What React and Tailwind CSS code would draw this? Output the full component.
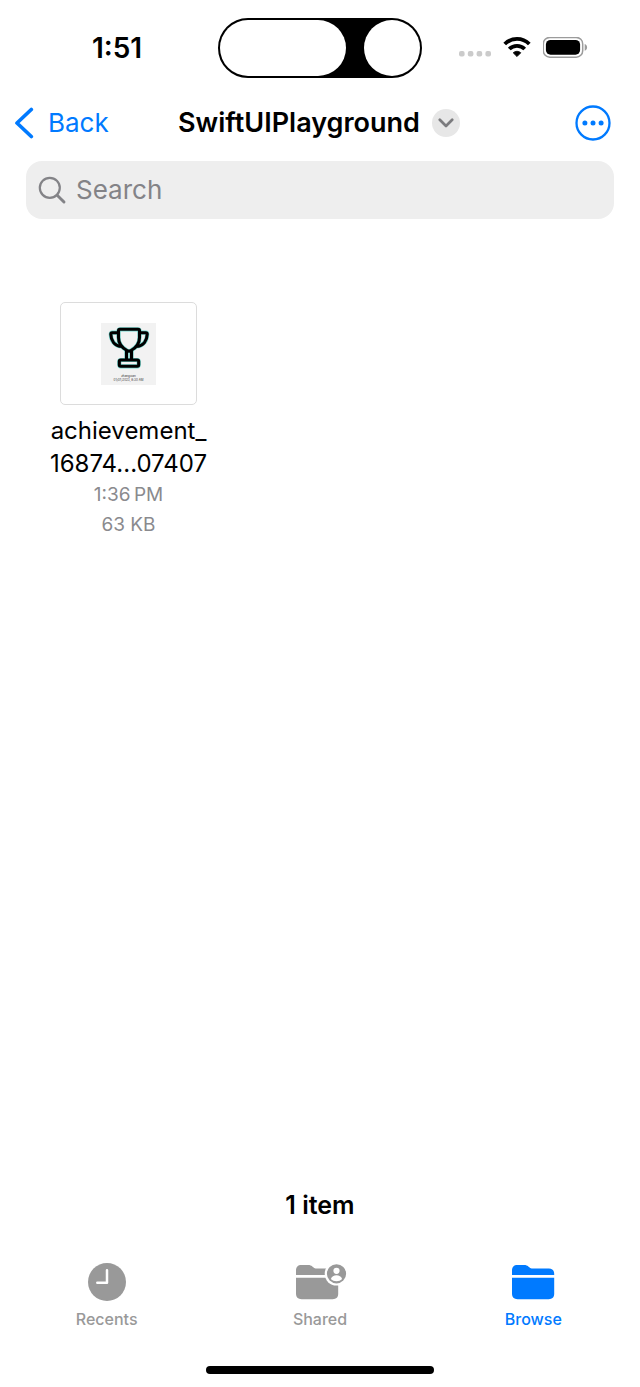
import React from "react";

function SignalDots() {
  return (
    <svg width="32" height="6" viewBox="0 0 32 6" fill="#cbcbcb" aria-hidden="true">
      <rect x="0" y="0" width="5.6" height="5.6" rx="2" />
      <rect x="8.8" y="0" width="5.6" height="5.6" rx="2" />
      <rect x="17.6" y="0" width="5.6" height="5.6" rx="2" />
      <rect x="26.4" y="0" width="5.6" height="5.6" rx="2" />
    </svg>
  );
}

function WifiIcon() {
  return (
    <svg width="28" height="22" viewBox="0 0 28 22" aria-hidden="true">
      <g fill="none" stroke="#000" strokeWidth="3.8">
        <path d="M1.700 7a17.400 17.400 0 0 1 24.600 0" />
        <path d="M6.300 12a10.900 10.900 0 0 1 15.400 0" />
      </g>
      <path d="M10.200 15.800a5.500 5.500 0 0 1 7.600 0L14 19.600z" fill="#000" stroke="#000" strokeWidth="0.800" strokeLinejoin="round" />
    </svg>
  );
}

function BatteryIcon() {
  return (
    <svg width="46" height="22" viewBox="0.500 0.400 46 22" aria-hidden="true">
      <rect x="0.800" y="0.800" width="39.400" height="19.800" rx="6.500" fill="none" stroke="#9b9b9b" strokeWidth="1.500" />
      <rect x="3.400" y="3.300" width="34.200" height="14.800" rx="4.600" fill="#000" />
      <path d="M42.200 7.400c1.500.6 2.400 1.900 2.400 3.400s-.9 2.800-2.400 3.400z" fill="#9b9b9b" />
    </svg>
  );
}

function StatusBar() {
  return (
    <div className="grid grid-cols-[1fr_204px_1fr] items-center pt-[18px] pb-4">
      <time className="pl-4 text-center text-[28px] leading-8 font-semibold">1:51</time>
      <div className="flex h-[60px] justify-between rounded-full border-2 border-black bg-black">
        <div className="h-14 w-[126px] rounded-full bg-white" />
        <div className="size-14 rounded-full bg-white" />
      </div>
      <div className="flex items-center gap-3 pl-[37px]">
        <div className="pt-3">
          <SignalDots />
        </div>
        <WifiIcon />
        <BatteryIcon />
      </div>
    </div>
  );
}

function NavBar() {
  return (
    <header className="grid h-[58px] grid-cols-[1fr_auto_1fr] items-center pr-[29px] pl-[14px]">
      <a href="#back" className="flex items-center gap-[14px] text-[26px] leading-8 text-[#007aff]">
        <svg width="20" height="32" viewBox="0 0 20 32" fill="none" aria-hidden="true">
          <path d="M17.300 2.500 3 16l14.300 13.500" stroke="currentColor" strokeWidth="3.700" strokeLinecap="round" strokeLinejoin="round" />
        </svg>
        Back
      </a>
      <div className="flex items-center gap-3 pl-[13px]">
        <h1 className="text-[27px] leading-8 font-semibold">SwiftUIPlayground</h1>
        <button type="button" aria-label="Folder options" className="flex size-7 items-center justify-center rounded-full bg-[#e7e7e7]">
          <svg width="16" height="10" viewBox="0 0 16 10" fill="none" aria-hidden="true">
            <path d="M1.800 1.800 8 8l6.200-6.200" stroke="#7b7b7e" strokeWidth="2.700" strokeLinecap="round" strokeLinejoin="round" />
          </svg>
        </button>
      </div>
      <button type="button" aria-label="More" className="justify-self-end text-[#007aff]">
        <svg width="36" height="36" viewBox="0 0 36 36" aria-hidden="true">
          <circle cx="18" cy="18" r="16.500" fill="none" stroke="currentColor" strokeWidth="2.300" />
          <g fill="currentColor">
            <circle cx="9.900" cy="18" r="2.500" />
            <circle cx="18" cy="18" r="2.500" />
            <circle cx="26.100" cy="18" r="2.500" />
          </g>
        </svg>
      </button>
    </header>
  );
}

function SearchField() {
  return (
    <div className="mx-[26px] mt-[9px] flex h-[58px] items-center gap-[9px] rounded-2xl bg-[#eeeeee] px-3">
      <svg width="29" height="29" viewBox="0 0 29 29" fill="none" stroke="#838387" aria-hidden="true">
        <circle cx="11.800" cy="11.800" r="10" strokeWidth="2.200" />
        <path d="M19.200 19.200 26 26" strokeWidth="2.900" strokeLinecap="round" />
      </svg>
      <input
        type="search"
        aria-label="Search"
        placeholder="Search"
        className="min-w-0 flex-1 bg-transparent text-[26px] leading-8 outline-none placeholder:text-[#838387]"
      />
    </div>
  );
}

function TrophyPaths() {
  return (
    <>
      <path d="M12 2.800h18q1.500 0 1.500 1.500v6.700c0 5.500-3.300 10.200-8.500 13q-2 1.200-4 0c-5.200-2.800-8.500-7.500-8.500-13V4.300Q10.500 2.800 12 2.800z" />
      <path d="M10.500 6.200H4.300q-1.500 0-1.500 1.500c.2 6.500 3.800 11.300 10.200 12.300" />
      <path d="M31.500 6.200h6.200q1.500 0 1.500 1.500c-.2 6.500-3.800 11.300-10.200 12.300" />
      <path d="M18.500 24.500v9M23.500 24.500v9" />
      <rect x="11.300" y="33.500" width="19.400" height="6.300" rx="1.500" />
    </>
  );
}

function FileTile() {
  return (
    <a href="#achievement" className="flex flex-col items-center text-center">
      <div className="flex h-[103px] w-[137px] items-center justify-center rounded-[5px] border border-[#dcdcdc]">
        <div className="flex h-[62px] w-[55px] flex-col items-center bg-[#f2f2f2] pt-1">
          <svg width="42" height="44" viewBox="0 0.500 42 44" fill="none" strokeLinejoin="round" aria-hidden="true">
            <g stroke="#6fd6cd" strokeWidth="4.200">
              <TrophyPaths />
            </g>
            <g stroke="#000" strokeWidth="3.100">
              <TrophyPaths />
            </g>
          </svg>
          <div className="pt-[3px] text-[3px] leading-[4px] text-[#333]">
            <p>zhangxian</p>
            <p>01/07/2023, 8:30 AM</p>
          </div>
        </div>
      </div>
      <div className="pt-[9px] text-[24px] leading-[33px]">
        <p>achievement_</p>
        <p>16874...07407</p>
      </div>
      <div className="text-[19px] leading-[30px] text-[#8a8a8e]">
        <p>1:36&#8201;PM</p>
        <p>63 KB</p>
      </div>
    </a>
  );
}

function ClockIcon() {
  return (
    <svg width="38" height="38" viewBox="0 0 38 38" aria-hidden="true">
      <circle cx="19" cy="19" r="19" fill="currentColor" />
      <path d="M19 7.300v12.400H9.300" fill="none" stroke="#fff" strokeWidth="2.500" strokeLinecap="round" strokeLinejoin="round" />
    </svg>
  );
}

function FolderShape() {
  return (
    <>
      <path d="M0 10V5.500C0 2 1.900 0 5.400 0h6.800c1.900 0 2.900.5 4.100 1.500l1.300 1.100c.9.800 1.600 1 2.900 1h16.400c3.500 0 5.300 1.900 5.300 5.300V10z" />
      <path d="M0 12.700h42.200V28.500c0 3.700-1.900 5.700-5.500 5.700H5.600C1.900 34.200 0 32.200 0 28.500z" />
    </>
  );
}

function FolderIcon() {
  return (
    <svg width="43" height="35" viewBox="0 0 43 35" fill="currentColor" aria-hidden="true">
      <FolderShape />
    </svg>
  );
}

function SharedFolderIcon() {
  return (
    <svg width="51" height="36" viewBox="0 -1 51 36" fill="currentColor" aria-hidden="true">
      <FolderShape />
      <circle cx="40.500" cy="8.800" r="11.800" fill="#fff" />
      <circle cx="40.500" cy="8.800" r="9.600" />
      <circle cx="40.500" cy="5.800" r="3.100" fill="#fff" />
      <path d="M34.900 14c.8-2.600 3-3.800 5.600-3.800s4.800 1.200 5.600 3.800c-1.500 1.500-3.400 2.200-5.600 2.200s-4.100-.7-5.600-2.200z" fill="#fff" />
    </svg>
  );
}

function TabBar() {
  return (
    <nav aria-label="Tabs" className="grid grid-cols-3 text-[16px] leading-5 font-medium text-[#999999]">
      <a href="#recents" className="flex flex-col items-center gap-2">
        <span className="flex h-[38px] items-center">
          <ClockIcon />
        </span>
        Recents
      </a>
      <a href="#shared" className="flex flex-col items-center gap-2">
        <span className="flex h-[38px] items-center pl-1">
          <SharedFolderIcon />
        </span>
        Shared
      </a>
      <a href="#browse" aria-current="page" className="flex flex-col items-center gap-2 text-[#007aff]">
        <span className="flex h-[38px] items-center">
          <FolderIcon />
        </span>
        Browse
      </a>
    </nav>
  );
}

export default function App() {
  return (
    <div className="flex min-h-screen flex-col bg-white font-['Inter',sans-serif] text-black">
      <StatusBar />
      <NavBar />
      <SearchField />
      <main className="flex flex-1 flex-col justify-between px-[30px] pt-[83px] pb-[42px]">
        <div className="grid grid-cols-[repeat(auto-fill,197px)]">
          <FileTile />
        </div>
        <p className="text-center text-[25px] leading-8 font-semibold">1 item</p>
      </main>
      <TabBar />
      <div className="flex justify-center pt-[37px] pb-[13px]">
        <div className="h-2 w-[228px] rounded-full bg-black" />
      </div>
    </div>
  );
}
